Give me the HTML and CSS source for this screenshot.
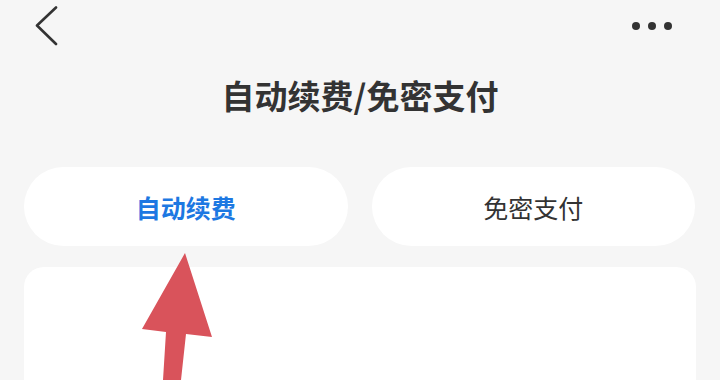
FILE: index.html
```html
<!DOCTYPE html>
<html lang="zh">
<head>
<meta charset="utf-8">
<link rel="stylesheet" href="styles.css">
</head>
<body>
<div class="page">
  <div class="nav">
    <svg class="back" width="24" height="40" viewBox="0 0 24 40">
      <polyline points="21,1.5 2,19.5 21,38" fill="none" stroke="#333" stroke-width="2.6" stroke-linecap="round" stroke-linejoin="round"/>
    </svg>
    <div class="more">
      <span class="dot"></span><span class="dot"></span><span class="dot"></span>
    </div>
  </div>
  <h1 class="title">自动续费/免密支付</h1>
  <div class="tabs">
    <div class="tab active">自动续费</div>
    <div class="tab">免密支付</div>
  </div>
  <div class="card"></div>
  <svg class="arrow" width="720" height="380" viewBox="0 0 720 380">
    <polygon points="185,253 212,337 186,334 181,380 163,380 166,332 142,329" fill="#d9535b"/>
  </svg>
</div>
</body>
</html>
```
FILE: styles.css
```css
html, body {
  margin: 0;
  padding: 0;
  background: #f6f6f6;
  font-family: "Noto Sans CJK SC", "Noto Sans", sans-serif;
  color: #333;
}
.page {
  position: relative;
  width: 720px;
  height: 380px;
  overflow: hidden;
}
.nav {
  height: 52px;
  display: flex;
  align-items: center;
  justify-content: space-between;
  padding: 0 48px 0 35px;
}
.back {
  display: block;
}
.more {
  display: flex;
  gap: 8px;
  align-items: center;
}
.dot {
  width: 8px;
  height: 8px;
  border-radius: 50%;
  background: #333;
}
.title {
  margin: 23px 0 0;
  font-size: 33px;
  line-height: 40px;
  font-weight: 700;
  text-align: center;
  color: #333;
}
.tabs {
  display: flex;
  gap: 24px;
  padding: 0 25px 0 24px;
  margin-top: 52px;
}
.tab {
  flex: 1;
  height: 79px;
  border-radius: 40px;
  background: #fff;
  display: flex;
  align-items: center;
  justify-content: center;
  font-size: 25px;
  color: #333;
}
.tab.active {
  color: #1d78e2;
  font-weight: 700;
}
.card {
  margin: 21px 24px 0;
  height: 140px;
  background: #fff;
  border-radius: 20px;
}
.arrow {
  position: absolute;
  left: 0;
  top: 0;
}
```
